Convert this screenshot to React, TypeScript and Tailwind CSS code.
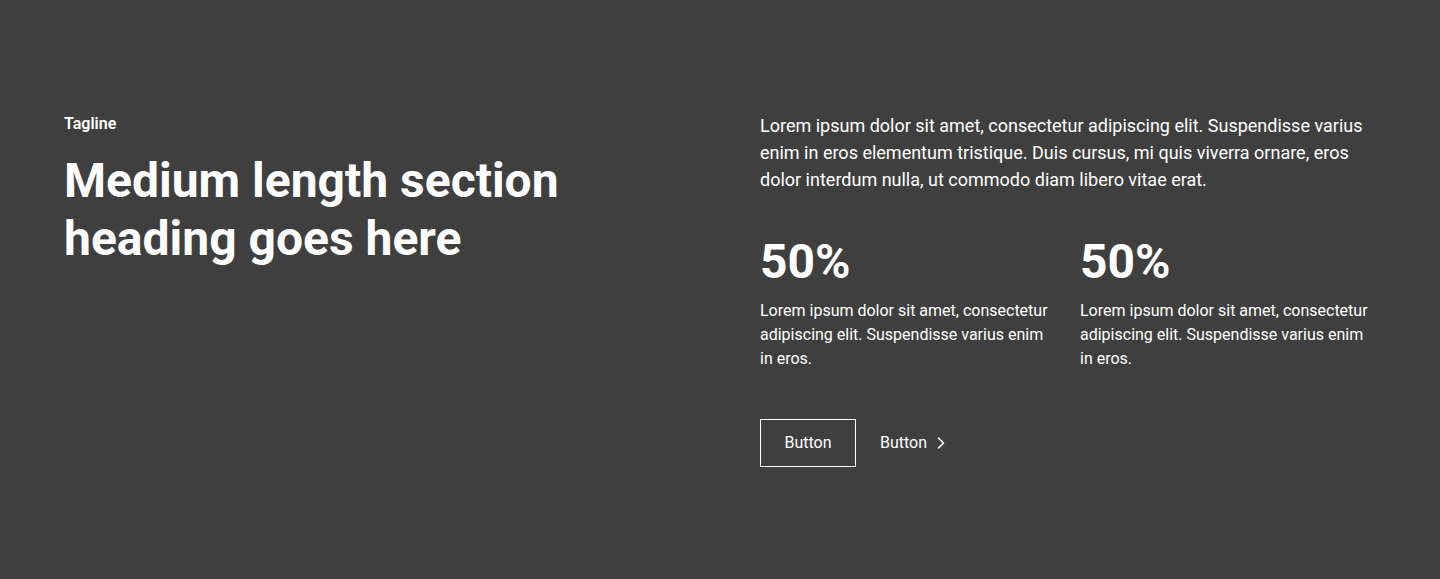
const stats = [
  {
    value: "50%",
    text: "Lorem ipsum dolor sit amet, consectetur adipiscing elit. Suspendisse varius enim in eros.",
  },
  {
    value: "50%",
    text: "Lorem ipsum dolor sit amet, consectetur adipiscing elit. Suspendisse varius enim in eros.",
  },
];

const Chevron = () => (
  <svg
    width="8"
    height="12"
    viewBox="0 0 8 12"
    fill="none"
    stroke="currentColor"
    strokeWidth="1.6"
    strokeLinecap="round"
    strokeLinejoin="round"
    className="ml-[10px]"
  >
    <path d="M1.5 1 L6.5 6 L1.5 11" />
  </svg>
);

const App = () => {
  return (
    <section
      className="min-h-[579px] bg-[#3f3f3f] px-16 py-28 text-white"
      style={{ fontFamily: "Roboto, 'Noto Sans', sans-serif" }}
    >
      <div className="grid grid-cols-2 gap-x-20">
        {/* Left: tagline + heading */}
        <div>
          <p className="mb-4 text-base font-semibold leading-6">Tagline</p>
          <h2 className="text-5xl font-bold leading-[1.2]">
            Medium length section heading goes here
          </h2>
        </div>

        {/* Right: copy, stats, buttons */}
        <div>
          <p className="text-lg leading-[1.5]">
            Lorem ipsum dolor sit amet, consectetur adipiscing elit. Suspendisse
            varius enim in eros elementum tristique. Duis cursus, mi quis viverra
            ornare, eros dolor interdum nulla, ut commodo diam libero vitae erat.
          </p>

          <div className="mt-10 grid grid-cols-2 gap-6">
            {stats.map((stat, i) => (
              <div key={i}>
                <h3 className="mb-2 text-5xl font-bold leading-[1.2]">
                  {stat.value}
                </h3>
                <p className="text-base leading-6">{stat.text}</p>
              </div>
            ))}
          </div>

          <div className="mt-[48px] flex items-center gap-6">
            <button className="w-[96px] border border-white py-[11px] text-center text-base leading-6 text-white">
              Button
            </button>
            <button className="flex items-center text-base leading-6 text-white">
              Button
              <Chevron />
            </button>
          </div>
        </div>
      </div>
    </section>
  );
};

export default App;
